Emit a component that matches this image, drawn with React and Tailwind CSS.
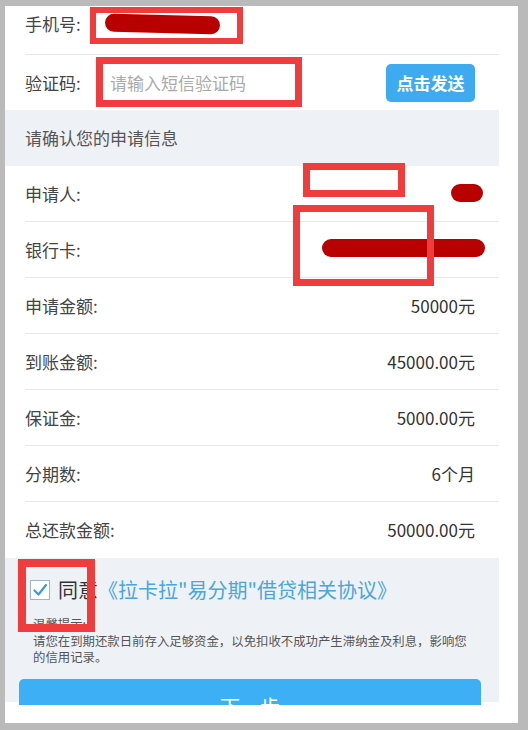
import React from 'react';

const font = { fontFamily: '"Noto Sans CJK SC", "Noto Sans", sans-serif' };

const rows = [
  ['申请人:', null],
  ['银行卡:', null],
  ['申请金额:', '50000元'],
  ['到账金额:', '45000.00元'],
  ['保证金:', '5000.00元'],
  ['分期数:', '6个月'],
  ['总还款金额:', '50000.00元'],
];

function Row({ label, value, last }) {
  return (
    <div className="pl-[20px]">
      <div className={`h-[56px] flex items-center justify-between pr-[24px] ${last ? '' : 'border-b border-[#e6e8ec]'}`}>
        <span className="text-[17px] text-[#444]">{label}</span>
        {value && <span className="text-[17px] text-[#333]">{value}</span>}
      </div>
    </div>
  );
}

export default function App() {
  return (
    <div className="relative w-[528px] h-[730px] bg-[#bababa] pt-[6px] pl-[5px] overflow-hidden" style={font}>
      <div className="w-[513px] h-[717px] bg-white">
        <div className="w-[494px] h-[699px] overflow-hidden bg-white">
          {/* phone */}
          <div className="pl-[20px]">
            <div className="h-[49px] pb-[12px] flex items-center border-b border-[#e6e8ec]">
              <span className="text-[17px] text-[#444]">手机号:</span>
            </div>
          </div>
          {/* code */}
          <div className="pl-[20px]">
            <div className="h-[55px] flex items-center pr-[24px]">
              <span className="text-[17px] text-[#444] w-[85px]">验证码:</span>
              <span className="text-[17px] text-[#aaa] flex-1">请输入短信验证码</span>
              <button className="w-[89px] h-[38px] rounded-[5px] bg-[#3eaaef] text-white text-[17px] font-bold">点击发送</button>
            </div>
          </div>
          {/* header */}
          <div className="h-[56px] bg-[#eef1f6] pl-[20px] flex items-center">
            <span className="text-[17px] text-[#555]">请确认您的申请信息</span>
          </div>
          {rows.map(([l, v], i) => (
            <Row key={l} label={l} value={v} last={i === rows.length - 1} />
          ))}
          {/* agreement */}
          <div className="bg-[#eef1f6] h-[144px] pt-[21px] px-[14px]">
            <div className="flex items-center h-[22px] pl-[11px]">
              <span className="w-[20px] h-[20px] bg-white border border-[#9fb4c4] flex items-center justify-center mr-[8px]">
                <svg width="16" height="16" viewBox="0 0 16 16">
                  <path d="M2.5 8.5 L6.5 12.5 L14 3" fill="none" stroke="#3b9ad8" strokeWidth="2.2" strokeLinecap="round" strokeLinejoin="round" />
                </svg>
              </span>
              <span className="text-[20px] text-[#333] leading-none">同意</span>
              <span className="text-[20px] text-[#4aa6dc] leading-none">《拉卡拉"易分期"借贷相关协议》</span>
            </div>
            <div className="mt-[15px] pl-[14px] pr-[10px] text-[12.4px] leading-[16.5px] text-[#555]">
              <p>温馨提示:</p>
              <p>请您在到期还款日前存入足够资金，以免扣收不成功产生滞纳金及利息，影响您的信用记录。</p>
            </div>
            <div className="mt-[13px] w-[462px] h-[44px] rounded-[5px] bg-[#3db0f5] flex items-center justify-center">
              <span className="text-white text-[20px] mt-[12px]">下一步</span>
            </div>
          </div>
        </div>
      </div>

      {/* redaction marks drawn over the screenshot */}
      <div className="absolute left-[90px] top-[7px] w-[153px] h-[37px] border-[6px] border-[#f03c3c]" />
      <div className="absolute left-[105px] top-[15px] w-[115px] h-[18px] rounded-full bg-[#b80000] rotate-[1.5deg]" />
      <div className="absolute left-[96px] top-[57px] w-[206px] h-[50px] border-[7px] border-[#f03c3c]" />
      <div className="absolute left-[303px] top-[163px] w-[102px] h-[34px] border-[7px] border-[#f03c3c]" />
      <div className="absolute left-[451px] top-[184px] w-[32px] h-[18px] rounded-full bg-[#b80000]" />
      <div className="absolute left-[322px] top-[239px] w-[163px] h-[18px] rounded-full bg-[#b80000]" />
      <div className="absolute left-[293px] top-[205px] w-[141px] h-[81px] border-[7px] border-[#f03c3c]" />
      <div className="absolute left-[18px] top-[559px] w-[77px] h-[73px] border-[8px] border-[#f03c3c]" />
    </div>
  );
}
